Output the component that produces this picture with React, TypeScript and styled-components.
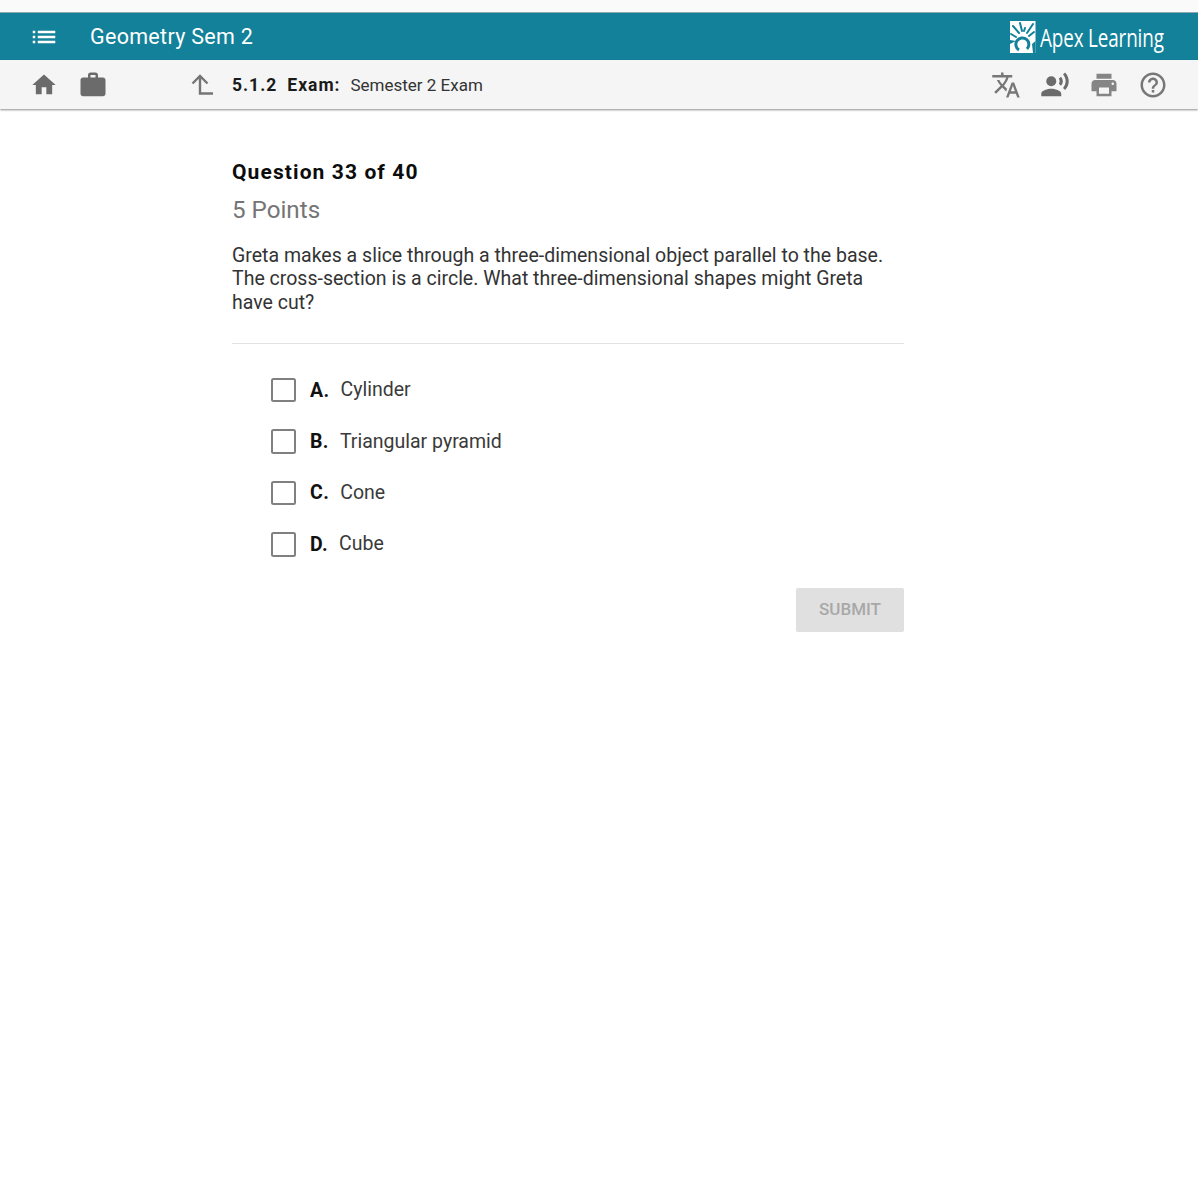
import styled, { createGlobalStyle } from 'styled-components';

const GlobalStyle = createGlobalStyle`
  html, body {
    margin: 0;
    padding: 0;
    background: #fff;
    font-family: Roboto, "Liberation Sans", sans-serif;
  }
`;

const Page = styled.div`
  width: 1198px;
  min-height: 1200px;
  background: #fff;
`;
const TopStrip = styled.div`
  height: 12px;
  background: #fafafa;
  border-bottom: 1px solid #8fa9b2;
`;
const Header = styled.header`
  height: 47px;
  display: flex;
  align-items: center;
  justify-content: space-between;
  padding: 0 30px 0 19px;
  background: #138199;
  color: #fff;
`;
const HeaderLeft = styled.div`
  display: flex;
  align-items: center;
`;
const MenuButton = styled.div`
  width: 49px;
  height: 47px;
  display: flex;
  align-items: center;
  justify-content: center;
`;
const CourseTitle = styled.div`
  margin-left: 22px;
  font-size: 21.5px;
  font-weight: 400;
  letter-spacing: 0.3px;
`;
const Logo = styled.div`
  display: flex;
  align-items: center;
  gap: 4px;
`;
const LogoText = styled.span`
  display: inline-block;
  width: 128px;
  font-family: "Open Sans", "Liberation Sans", sans-serif;
  font-size: 25.5px;
  font-weight: 500;
  line-height: 30px;
  white-space: nowrap;
  transform: scaleX(0.74);
  transform-origin: left center;
  letter-spacing: -0.2px;
`;
const Toolbar = styled.nav`
  height: 49px;
  display: flex;
  align-items: center;
  padding: 0 20.5px 0 19px;
  background: #f5f5f5;
  box-shadow: 0 1px 2px rgba(0, 0, 0, 0.45);
  position: relative;
`;
const IconButton = styled.div<{ $tone?: string }>`
  width: 49px;
  height: 49px;
  display: flex;
  align-items: center;
  justify-content: center;
  color: ${({ $tone }) => $tone || '#6b6b6b'};
`;
const Crumb = styled.div`
  margin-left: 74px;
  display: flex;
  align-items: center;
  flex: 1;
`;
const UpArrow = styled.div`
  width: 41px;
  display: flex;
  align-items: center;
  color: #757575;
`;
const CrumbStrong = styled.span`
  font-size: 17.5px;
  font-weight: 700;
  letter-spacing: 1px;
  color: #1a1a1a;
  margin-right: 10px;
`;
const CrumbText = styled.span`
  font-size: 17px;
  color: #333;
`;
const Main = styled.main`
  width: 672px;
  margin-left: 232px;
  padding-top: 50px;
`;
const QuestionTitle = styled.h1`
  margin: 0;
  font-size: 21px;
  line-height: 26px;
  font-weight: 700;
  letter-spacing: 1.1px;
  color: #0c0c0c;
`;
const Points = styled.div`
  margin-top: 10px;
  font-size: 24.2px;
  line-height: 30px;
  color: #757575;
`;
const Prompt = styled.p`
  margin: 19px 0 0;
  font-size: 19.53px;
  line-height: 23.4px;
  color: #333;
  width: 660px;
`;
const Divider = styled.hr`
  margin: 28.8px 0 0;
  border: 0;
  border-top: 1px solid #e2e2e2;
`;
const Options = styled.ul`
  list-style: none;
  margin: 20px 0 0;
  padding: 0 0 0 39px;
`;
const Option = styled.li`
  height: 51.4px;
  display: flex;
  align-items: center;
`;
const Box = styled.span`
  width: 20.5px;
  height: 20.5px;
  border: 2.5px solid #808080;
  border-radius: 2.5px;
  margin-top: 1px;
  margin-right: 14.5px;
`;
const Letter = styled.span`
  font-size: 19.5px;
  font-weight: 700;
  letter-spacing: 0.4px;
  color: #111;
  margin-top: 1px;
  margin-right: 11px;
`;
const OptionText = styled.span`
  font-size: 19.5px;
  color: #3a3a3a;
`;
const Actions = styled.div`
  display: flex;
  justify-content: flex-end;
  margin-top: 18px;
`;
const SubmitButton = styled.button`
  width: 108px;
  height: 44px;
  border: 0;
  border-radius: 2px;
  background: #e0e0e0;
  color: #a8a8a8;
  font-family: inherit;
  font-size: 17px;
  font-weight: 500;
  padding: 0 0 2px;
`;

const Icon = ({ d, size, children }: { d?: string; size: number; children?: React.ReactNode }) => (
  <svg width={size} height={size} viewBox="0 0 24 24" fill="currentColor">
    {d && <path d={d} />}
    {children}
  </svg>
);

const icons = {
  list: 'M3 13h2v-2H3v2zm0 4h2v-2H3v2zm0-8h2V7H3v2zm4 4h14v-2H7v2zm0 4h14v-2H7v2zM7 7v2h14V7H7z',
  home: 'M10 20v-6h4v6h5v-8h3L12 3 2 12h3v8z',
  work: 'M20 6h-4V4c0-1.11-.89-2-2-2h-4c-1.11 0-2 .89-2 2v2H4c-1.11 0-1.99.89-1.99 2L2 19c0 1.11.89 2 2 2h16c1.11 0 2-.89 2-2V8c0-1.11-.89-2-2-2zm-6 0h-4V4h4v2z',
  translate:
    'M12.87 15.07l-2.54-2.51.03-.03c1.74-1.94 2.98-4.17 3.71-6.53H17V4h-7V2H8v2H1v1.99h11.17C11.5 7.92 10.44 9.75 9 11.35 8.07 10.32 7.3 9.19 6.69 8h-2c.73 1.63 1.73 3.17 2.98 4.56l-5.09 5.02L4 19l5-5 3.11 3.11.76-2.04zM18.5 10h-2L12 22h2l1.12-3h4.75L21 22h2l-4.5-12zm-2.62 7l1.62-4.33L19.12 17h-3.24z',
  voice:
    'M9 15c-2.67 0-8 1.34-8 4v2h16v-2c0-2.66-5.33-4-8-4zm7.76-9.64l-1.68 1.69c.84 1.18.84 2.71 0 3.89l1.68 1.69c2.02-2.02 2.02-5.07 0-7.27zM20.07 2l-1.63 1.63c2.77 3.02 2.77 7.56 0 10.74L20.07 16c3.9-3.89 3.91-9.95 0-14z',
  print:
    'M19 8H5c-1.66 0-3 1.34-3 3v6h4v4h12v-4h4v-6c0-1.66-1.34-3-3-3zm-3 11H8v-5h8v5zm3-7c-.55 0-1-.45-1-1s.45-1 1-1 1 .45 1 1-.45 1-1 1zm-1-9H6v4h12V3z',
  help: 'M11 18h2v-2h-2v2zm1-16C6.48 2 2 6.48 2 12s4.48 10 10 10 10-4.48 10-10S17.52 2 12 2zm0 18c-4.41 0-8-3.59-8-8s3.59-8 8-8 8 3.59 8 8-3.59 8-8 8zm0-14c-2.21 0-4 1.79-4 4h2c0-1.1.9-2 2-2s2 .9 2 2c0 2-3 1.75-3 5h2c0-2.25 3-2.5 3-5 0-2.21-1.79-4-4-4z'
};

const options = [
  { id: 'A', text: 'Cylinder' },
  { id: 'B', text: 'Triangular pyramid' },
  { id: 'C', text: 'Cone' },
  { id: 'D', text: 'Cube' }
];

export default function App() {
  return (
    <Page>
      <GlobalStyle />
      <TopStrip />
      <Header>
        <HeaderLeft>
          <MenuButton>
            <Icon d={icons.list} size={30} />
          </MenuButton>
          <CourseTitle>Geometry Sem 2</CourseTitle>
        </HeaderLeft>
        <Logo>
          <svg width="26" height="32" viewBox="0 0 26 32">
            <rect width="25.5" height="32" fill="#fff" />
            <g stroke="#138199" strokeWidth="2" strokeLinecap="round" fill="none">
              <path d="M3 5l6 7M10 2l2 8M15 7l-1 3M23 3l-6 9M24 11l-5 4M1 13l5 3" />
            </g>
            <path d="M0 19l6 1-6 3zM23 32l-1-9 3.5-3v12z" fill="#138199" />
            <path d="M9 29a6.5 6.5 0 1 1 8 -1" fill="none" stroke="#138199" strokeWidth="3" />
          </svg>
          <LogoText>Apex Learning</LogoText>
        </Logo>
      </Header>
      <Toolbar>
        <IconButton>
          <Icon d={icons.home} size={28} />
        </IconButton>
        <IconButton>
          <Icon d={icons.work} size={30} />
        </IconButton>
        <Crumb>
          <UpArrow>
            <svg width="24" height="24" viewBox="0 0 24 24" fill="none" stroke="currentColor" strokeWidth="2.4">
              <path d="M1.5 10.5l7.5-7.5 7.5 7.5M9 3v17.5h13" />
            </svg>
          </UpArrow>
          <CrumbStrong>5.1.2</CrumbStrong>
          <CrumbStrong>Exam:</CrumbStrong>
          <CrumbText>Semester 2 Exam</CrumbText>
        </Crumb>
        <IconButton $tone="#777">
          <Icon d={icons.translate} size={30} />
        </IconButton>
        <IconButton>
          <Icon d={icons.voice} size={30}>
            <circle cx="9" cy="9" r="4" />
          </Icon>
        </IconButton>
        <IconButton $tone="#858585">
          <Icon d={icons.print} size={30} />
        </IconButton>
        <IconButton $tone="#777">
          <Icon d={icons.help} size={30} />
        </IconButton>
      </Toolbar>
      <Main>
        <QuestionTitle>Question 33 of 40</QuestionTitle>
        <Points>5 Points</Points>
        <Prompt>
          Greta makes a slice through a three-dimensional object parallel to the base. The
          cross-section is a circle. What three-dimensional shapes might Greta have cut?
        </Prompt>
        <Divider />
        <Options>
          {options.map(({ id, text }) => (
            <Option key={id}>
              <Box />
              <Letter>{id}.</Letter>
              <OptionText>{text}</OptionText>
            </Option>
          ))}
        </Options>
        <Actions>
          <SubmitButton>SUBMIT</SubmitButton>
        </Actions>
      </Main>
    </Page>
  );
}
